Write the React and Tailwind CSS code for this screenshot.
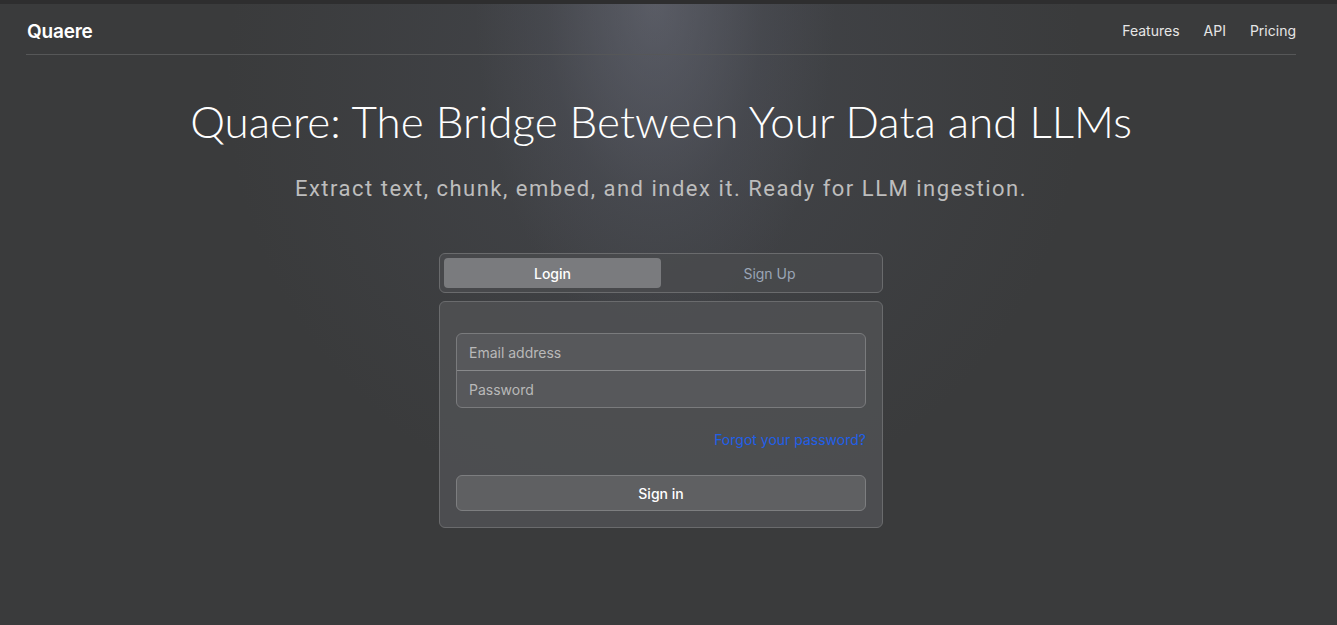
export default function App() {
  return (
    <div
      className="relative min-h-[625px] w-full overflow-hidden bg-[#3a3b3c] text-white"
      style={{ fontFamily: "Inter, 'Liberation Sans', sans-serif" }}
    >
      <div className="pointer-events-none absolute inset-0 bg-[radial-gradient(ellipse_180px_340px_at_655px_0px,rgba(125,127,140,0.55),rgba(90,92,102,0.25)_60%,rgba(0,0,0,0)_100%)]" />
      <div className="pointer-events-none absolute inset-0 bg-[radial-gradient(ellipse_430px_440px_at_655px_80px,rgba(80,84,96,0.4),rgba(0,0,0,0)_100%)]" />
      <div className="relative h-[4px] w-full bg-[#2e2e2f]" />
      <div className="relative flex w-[1322px] flex-col">
        <header className="mx-[26px] flex h-[51px] items-center justify-between border-b border-[#565758] pt-[3px]">
          <div className="mt-[3px] pl-px text-[19px] font-semibold tracking-[-0.2px] text-white">Quaere</div>
          <nav className="flex items-center gap-[24px] text-[14px] text-[#e6e6e6]">
            <span>Features</span>
            <span>API</span>
            <span>Pricing</span>
          </nav>
        </header>
        <h1
          className="mt-[36px] text-center text-[44px] font-light leading-[60px] text-white"
          style={{ fontFamily: "Lato, 'Open Sans', sans-serif" }}
        >
          Quaere: The Bridge Between Your Data and LLMs
        </h1>
        <p
          className="mt-[23px] text-center text-[22px] leading-[30px] tracking-[1.5px] text-[#bdbdbd]"
          style={{ fontFamily: "Roboto, sans-serif" }}
        >
          Extract text, chunk, embed, and index it. Ready for LLM ingestion.
        </p>
        <div className="mx-auto mt-[49px] w-[444px]">
          <div className="flex h-[40px] gap-0 rounded-[6px] border border-[#6a6b6d] bg-[#4a4b4e]/80 p-[4px]">
            <button className="flex-1 rounded-[4px] bg-[#7a7b7e] text-[14px] font-medium text-white">Login</button>
            <button className="flex-1 rounded-[4px] text-[14px] text-[#9aa5b6]">Sign Up</button>
          </div>
          <div className="mt-[8px] rounded-[6px] border border-[#6a6b6d] bg-[#505154]/85 px-[16px] pb-[16px] pt-[31px]">
            <div className="overflow-hidden rounded-[6px] border border-[#7a7b7d] bg-[#57585b]">
              <div className="flex h-[37px] items-center border-b border-[#88898b] px-[12px] text-[14px] text-[#b9b9b9]">
                Email address
              </div>
              <div className="flex h-[36px] items-center px-[12px] text-[14px] text-[#b9b9b9]">Password</div>
            </div>
            <div className="mt-[22px] flex justify-end text-[14px] leading-[20px] text-[#1f5fe8]">
              Forgot your password?
            </div>
            <button className="mt-[25px] flex h-[36px] w-full items-center justify-center rounded-[6px] border border-[#7d7e80] bg-[#5f6062] text-[14px] font-medium text-white">
              Sign in
            </button>
          </div>
        </div>
      </div>
    </div>
  );
}
